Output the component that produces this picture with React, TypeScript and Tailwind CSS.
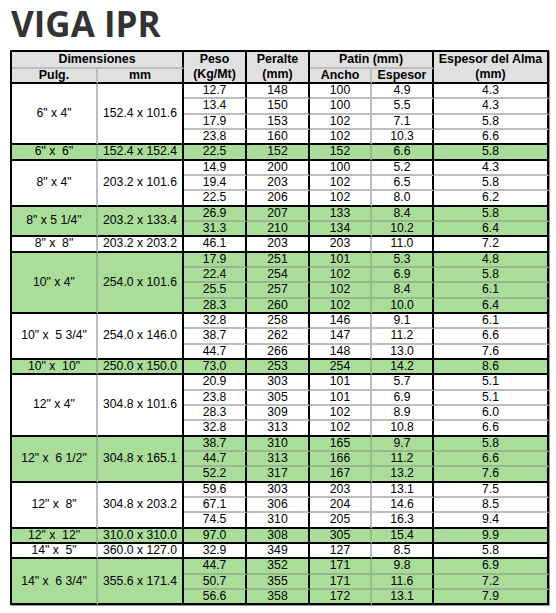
import React from "react";

type Row = [string, string, string, string, string];
type Group = { pulg: string; mm: string; rows: Row[] };

const groups: Group[] = [
  { pulg: '6" x 4"', mm: "152.4 x 101.6", rows: [["12.7","148","100","4.9","4.3"],["13.4","150","100","5.5","4.3"],["17.9","153","102","7.1","5.8"],["23.8","160","102","10.3","6.6"]] },
  { pulg: '6" x  6"', mm: "152.4 x 152.4", rows: [["22.5","152","152","6.6","5.8"]] },
  { pulg: '8" x 4"', mm: "203.2 x 101.6", rows: [["14.9","200","100","5.2","4.3"],["19.4","203","102","6.5","5.8"],["22.5","206","102","8.0","6.2"]] },
  { pulg: '8" x 5 1/4"', mm: "203.2 x 133.4", rows: [["26.9","207","133","8.4","5.8"],["31.3","210","134","10.2","6.4"]] },
  { pulg: '8" x  8"', mm: "203.2 x 203.2", rows: [["46.1","203","203","11.0","7.2"]] },
  { pulg: '10" x 4"', mm: "254.0 x 101.6", rows: [["17.9","251","101","5.3","4.8"],["22.4","254","102","6.9","5.8"],["25.5","257","102","8.4","6.1"],["28.3","260","102","10.0","6.4"]] },
  { pulg: '10" x  5 3/4"', mm: "254.0 x 146.0", rows: [["32.8","258","146","9.1","6.1"],["38.7","262","147","11.2","6.6"],["44.7","266","148","13.0","7.6"]] },
  { pulg: '10" x  10"', mm: "250.0 x 150.0", rows: [["73.0","253","254","14.2","8.6"]] },
  { pulg: '12" x 4"', mm: "304.8 x 101.6", rows: [["20.9","303","101","5.7","5.1"],["23.8","305","101","6.9","5.1"],["28.3","309","102","8.9","6.0"],["32.8","313","102","10.8","6.6"]] },
  { pulg: '12" x  6 1/2"', mm: "304.8 x 165.1", rows: [["38.7","310","165","9.7","5.8"],["44.7","313","166","11.2","6.6"],["52.2","317","167","13.2","7.6"]] },
  { pulg: '12" x  8"', mm: "304.8 x 203.2", rows: [["59.6","303","203","13.1","7.5"],["67.1","306","204","14.6","8.5"],["74.5","310","205","16.3","9.4"]] },
  { pulg: '12" x  12"', mm: "310.0 x 310.0", rows: [["97.0","308","305","15.4","9.9"]] },
  { pulg: '14" x  5"', mm: "360.0 x 127.0", rows: [["32.9","349","127","8.5","5.8"]] },
  { pulg: '14" x  6 3/4"', mm: "355.6 x 171.4", rows: [["44.7","352","171","9.8","6.9"],["50.7","355","171","11.6","7.2"],["56.6","358","172","13.1","7.9"]] },
];

// right border type per data column: Peso, Peralte, Ancho, Espesor, Alma
const rightBlack = [true, true, false, true, true];

export default function App() {
  return (
    <div className="w-[556px] h-[613px] bg-white overflow-hidden" style={{ fontFamily: '"Liberation Sans", Arial, sans-serif' }}>
      <h1
        className="pl-[11px] pt-[2px] h-[50px] text-[35px] leading-[44px] font-bold text-[#333333]"
        style={{ fontFamily: '"Open Sans", sans-serif' }}
      >
        VIGA IPR
      </h1>
      <table className="ml-[10px] w-[537px] table-fixed border-separate border-spacing-0 border-l-2 border-t-2 border-black text-[12.2px] text-black text-center shadow-[1px_1px_0_#9a9a9a]">
        <colgroup>
          <col className="w-[86px]" />
          <col className="w-[86px]" />
          <col className="w-[63px]" />
          <col className="w-[63px]" />
          <col className="w-[62px]" />
          <col className="w-[62px]" />
          <col className="w-[115px]" />
        </colgroup>
        <thead className="bg-[#e0e0e0] font-bold text-[12.4px]">
          <tr className="h-[16px]">
            <th colSpan={2} className="p-0 leading-[14px] border-r-2 border-b-2 border-r-black border-b-[#bdbdbd]">Dimensiones</th>
            <th rowSpan={2} className="p-0 leading-[15px] border-r-2 border-b-2 border-black">Peso<br />(Kg/Mt)</th>
            <th rowSpan={2} className="p-0 leading-[15px] border-r-2 border-b-2 border-black">Peralte<br />(mm)</th>
            <th colSpan={2} className="p-0 leading-[14px] border-r-2 border-b-2 border-r-black border-b-[#bdbdbd]">Patin (mm)</th>
            <th rowSpan={2} className="p-0 leading-[15px] border-r-2 border-b-2 border-black">Espesor del Alma<br />(mm)</th>
          </tr>
          <tr className="h-[15px]">
            <th className="p-0 leading-[13px] border-r-2 border-b-2 border-r-[#bdbdbd] border-b-black">Pulg.</th>
            <th className="p-0 leading-[13px] border-r-2 border-b-2 border-black">mm</th>
            <th className="p-0 leading-[13px] border-r-2 border-b-2 border-r-[#bdbdbd] border-b-black">Ancho</th>
            <th className="p-0 leading-[13px] border-r-2 border-b-2 border-black">Espesor</th>
          </tr>
        </thead>
        <tbody>
          {groups.map((g, gi) => {
            const green = gi % 2 === 1;
            const bg = green ? "bg-[#a9dd99]" : "bg-white";
            const grayR = green ? "border-r-[#98b98d]" : "border-r-[#bdbdbd]";
            const grayB = green ? "border-b-[#98b98d]" : "border-b-[#bdbdbd]";
            return g.rows.map((r, ri) => {
              const last = ri === g.rows.length - 1;
              return (
                <tr key={`${gi}-${ri}`} className={`h-[15.33px] ${bg}`}>
                  {ri === 0 && (
                    <>
                      <td rowSpan={g.rows.length} className={`p-0 leading-[13px] whitespace-pre border-r-2 border-b-2 ${grayR} border-b-black`}>
                        {g.pulg}
                      </td>
                      <td rowSpan={g.rows.length} className="p-0 leading-[13px] whitespace-pre border-r-2 border-b-2 border-black">
                        {g.mm}
                      </td>
                    </>
                  )}
                  {r.map((v, ci) => {
                    const rc = rightBlack[ci] ? "border-r-black" : grayR;
                    const bc = last ? "border-b-black" : grayB;
                    return (
                      <td key={ci} className={`p-0 leading-[13px] border-r-2 border-b-2 ${rc} ${bc}`}>
                        {v}
                      </td>
                    );
                  })}
                </tr>
              );
            });
          })}
        </tbody>
      </table>
    </div>
  );
}
